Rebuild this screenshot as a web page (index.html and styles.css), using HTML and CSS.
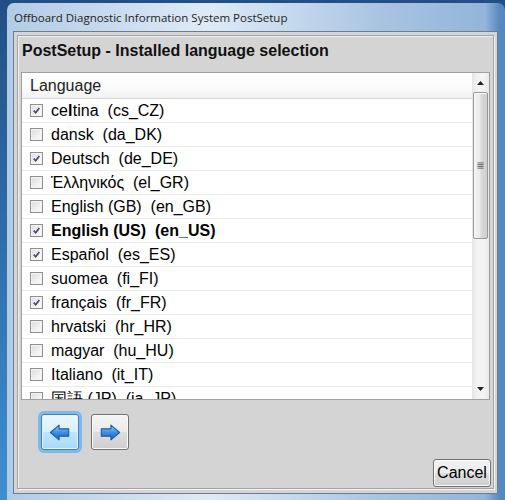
FILE: index.html
```html
<!DOCTYPE html>
<html>
<head>
<meta charset="utf-8">
<link rel="stylesheet" href="styles.css">
</head>
<body>
<div class="window">
  <div class="titlebar">Offboard Diagnostic Information System PostSetup</div>
  <div class="client">
    <div class="panel">
      <h1 class="heading">PostSetup - Installed language selection</h1>
      <div class="listbox">
        <div class="list">
          <div class="list-header">Language</div>
          <div class="row"><span class="cb on"><svg viewBox="0 0 13 13"><path d="M3.2 6.6 L5.6 9.2 L9.8 3.6"/></svg></span><span class="lbl">ce<b class="glitch">l</b>tina  (cs_CZ)</span></div>
          <div class="row"><span class="cb"></span><span class="lbl">dansk  (da_DK)</span></div>
          <div class="row"><span class="cb on"><svg viewBox="0 0 13 13"><path d="M3.2 6.6 L5.6 9.2 L9.8 3.6"/></svg></span><span class="lbl">Deutsch  (de_DE)</span></div>
          <div class="row"><span class="cb"></span><span class="lbl">Ἑλληνικός  (el_GR)</span></div>
          <div class="row"><span class="cb"></span><span class="lbl">English (GB)  (en_GB)</span></div>
          <div class="row"><span class="cb on"><svg viewBox="0 0 13 13"><path d="M3.2 6.6 L5.6 9.2 L9.8 3.6"/></svg></span><span class="lbl bold">English (US)  (en_US)</span></div>
          <div class="row"><span class="cb on"><svg viewBox="0 0 13 13"><path d="M3.2 6.6 L5.6 9.2 L9.8 3.6"/></svg></span><span class="lbl">Español  (es_ES)</span></div>
          <div class="row"><span class="cb"></span><span class="lbl">suomea  (fi_FI)</span></div>
          <div class="row"><span class="cb on"><svg viewBox="0 0 13 13"><path d="M3.2 6.6 L5.6 9.2 L9.8 3.6"/></svg></span><span class="lbl">français  (fr_FR)</span></div>
          <div class="row"><span class="cb"></span><span class="lbl">hrvatski  (hr_HR)</span></div>
          <div class="row"><span class="cb"></span><span class="lbl">magyar  (hu_HU)</span></div>
          <div class="row"><span class="cb"></span><span class="lbl">Italiano  (it_IT)</span></div>
          <div class="row"><span class="cb"></span><span class="lbl">国語 (JP)  (ja_JP)</span></div>
        </div>
        <div class="scrollbar">
          <div class="sb-btn"><svg viewBox="0 0 17 19"><path d="M5 12 L12 12 L8.5 8 Z"/></svg></div>
          <div class="sb-thumb"><svg viewBox="0 0 15 10"><path d="M4 1.5 H11 M4 3.5 H11 M4 5.5 H11 M4 7.5 H11"/></svg></div>
          <div class="sb-track"></div>
          <div class="sb-btn"><svg viewBox="0 0 17 19"><path d="M5 7 L12 7 L8.5 11 Z"/></svg></div>
        </div>
      </div>
      <div class="nav">
        <button class="navbtn focused" type="button">
          <svg viewBox="0 0 24 20"><defs><linearGradient id="ga" x1="0" y1="0" x2="0" y2="1"><stop offset="0" stop-color="#9fd0f8"/><stop offset="0.5" stop-color="#3d8fe0"/><stop offset="1" stop-color="#1f63c0"/></linearGradient></defs><path d="M1.5 10 L11 2 L11 6 L21.5 6 L21.5 14 L11 14 L11 18 Z" fill="url(#ga)" stroke="#1d5aa6" stroke-width="1.2" stroke-linejoin="round"/></svg>
        </button>
        <button class="navbtn" type="button">
          <svg viewBox="0 0 24 20"><defs><linearGradient id="gb" x1="0" y1="0" x2="0" y2="1"><stop offset="0" stop-color="#9fd0f8"/><stop offset="0.5" stop-color="#3d8fe0"/><stop offset="1" stop-color="#1f63c0"/></linearGradient></defs><path d="M22.5 10 L13 2 L13 6 L2.5 6 L2.5 14 L13 14 L13 18 Z" fill="url(#gb)" stroke="#1d5aa6" stroke-width="1.2" stroke-linejoin="round"/></svg>
        </button>
      </div>
      <div class="footer">
        <button class="cancel" type="button">Cancel</button>
      </div>
    </div>
  </div>
</div>
</body>
</html>
```
FILE: styles.css
```css
html, body {
  margin: 0;
  padding: 0;
}
body {
  width: 505px;
  height: 500px;
  overflow: hidden;
  background: linear-gradient(to bottom, #234e86 0%, #2f6fae 50%, #3c8fd3 100%);
}
.window {
  margin: 3px 0 0 7px;
  width: 498px;
  height: 497px;
  box-sizing: border-box;
  padding: 0 7px 0 6px;
  border-radius: 7px 7px 0 0;
  background:
    linear-gradient(to right, rgba(255,255,255,0) 0%, rgba(255,255,255,0) 96%, rgba(40,100,170,0.55) 99%),
    linear-gradient(to right, #b2cbe5 0%, #c7daee 20%, #dfeaf6 40%, #c8dbef 55%, #a9c4e1 75%, #8fb2d8 100%);
  display: flex;
  flex-direction: column;
}
.titlebar {
  height: 28px;
  box-sizing: border-box;
  padding: 7px 0 0 1px;
  font-family: "Open Sans", "Noto Sans", sans-serif;
  font-size: 11.5px;
  color: #1e1e1e;
  white-space: nowrap;
}
.client {
  height: 463px;
  box-sizing: border-box;
  border: 1px solid #6b7d90;
  background: #d4d4d4;
  padding: 3px 3px 4px 3px;
  display: flex;
}
.panel {
  flex: 1;
  border: 1px solid #a3a3a3;
  box-shadow: 1px 1px 0 #f4f4f4, inset 1px 1px 0 #f0f0f0;
  display: flex;
  flex-direction: column;
  padding: 3px 3px 1px 3px;
}
.heading {
  margin: 2px 0 0 1px;
  font-family: "Liberation Sans", Arial, sans-serif;
  font-weight: bold;
  font-size: 16px;
  line-height: 20px;
  color: #111;
}
.listbox {
  margin-top: 11px;
  height: 328px;
  box-sizing: border-box;
  border: 1px solid #a0a0a0;
  background: #fff;
  display: flex;
  overflow: hidden;
}
.list {
  flex: 1;
  overflow: hidden;
  font-family: "Liberation Sans", Arial, sans-serif;
  font-size: 16px;
}
.list-header {
  height: 26px;
  box-sizing: border-box;
  border-bottom: 1px solid #d6d6d6;
  background: linear-gradient(to bottom, #ffffff 0%, #fbfbfb 50%, #f2f2f2 100%);
  padding-left: 8px;
  line-height: 25px;
  color: #222;
}
.row {
  height: 24px;
  box-sizing: border-box;
  border-bottom: 1px solid #ebebeb;
  display: flex;
  align-items: center;
  padding-left: 8px;
  gap: 8px;
  color: #000;
}
.lbl {
  white-space: pre;
  line-height: 23px;
}
.lbl.bold {
  font-weight: bold;
}
.glitch {
  font-weight: bold;
  letter-spacing: 0.5px;
}
.cb {
  width: 13px;
  height: 13px;
  box-sizing: border-box;
  border: 1px solid #8e8f8f;
  background: linear-gradient(135deg, #dcdcdc 0%, #f1f1f1 60%, #fdfdfd 100%);
  box-shadow: inset 0 0 0 1px #f4f4f4;
  flex: none;
  display: flex;
}
.cb svg {
  width: 11px;
  height: 11px;
}
.cb svg path {
  fill: none;
  stroke: #3a4a68;
  stroke-width: 1.9;
}
.scrollbar {
  width: 17px;
  flex: none;
  background: linear-gradient(to right, #e6e6e6 0%, #f3f3f3 30%, #f3f3f3 70%, #e9e9e9 100%);
  display: flex;
  flex-direction: column;
}
.sb-btn {
  height: 19px;
  flex: none;
}
.sb-btn svg {
  display: block;
  width: 17px;
  height: 19px;
}
.sb-btn path {
  fill: #222;
}
.sb-thumb {
  margin: 0 1px;
  height: 147px;
  box-sizing: border-box;
  border: 1px solid #979797;
  border-radius: 2px;
  background: linear-gradient(to right, #f2f2f2 0%, #ebebeb 45%, #d9d9d9 55%, #cfcfcf 100%);
  box-shadow: inset 1px 1px 0 #fcfcfc;
  display: flex;
  align-items: center;
  justify-content: center;
}
.sb-thumb svg {
  width: 15px;
  height: 10px;
}
.sb-thumb path {
  stroke: #555;
  stroke-width: 1;
}
.sb-track {
  flex: 1;
}
.nav {
  display: flex;
  gap: 12px;
  margin: 14px 0 0 20px;
}
.navbtn {
  width: 38px;
  height: 36px;
  padding: 0;
  margin: 0;
  box-sizing: border-box;
  border: 1px solid #707070;
  border-radius: 3px;
  background: linear-gradient(to bottom, #f3f3f3 0%, #ebebeb 50%, #dddddd 51%, #cfcfcf 100%);
  box-shadow: inset 0 0 0 1px #fafafa;
  display: flex;
  align-items: center;
  justify-content: center;
}
.navbtn svg {
  width: 22px;
  height: 19px;
}
.navbtn.focused {
  border-color: #3c7fb1;
  background: linear-gradient(to bottom, #eaf6fd 0%, #d9f0fc 50%, #bee6fd 51%, #a7d9f5 100%);
  box-shadow: 0 0 0 3px #7fb8ec, inset 0 0 0 1px #e6f4fd;
}
.footer {
  margin-top: auto;
  display: flex;
  justify-content: flex-end;
}
.cancel {
  width: 58px;
  height: 28px;
  margin: 0 -1px 0 0;
  padding: 0;
  box-sizing: border-box;
  border: 1px solid #707070;
  border-radius: 3px;
  background: linear-gradient(to bottom, #f2f2f2 0%, #ebebeb 50%, #dddddd 51%, #cfcfcf 100%);
  box-shadow: inset 0 0 0 1px #fbfbfb;
  font-family: "Liberation Sans", Arial, sans-serif;
  font-size: 16px;
  color: #000;
}
```
